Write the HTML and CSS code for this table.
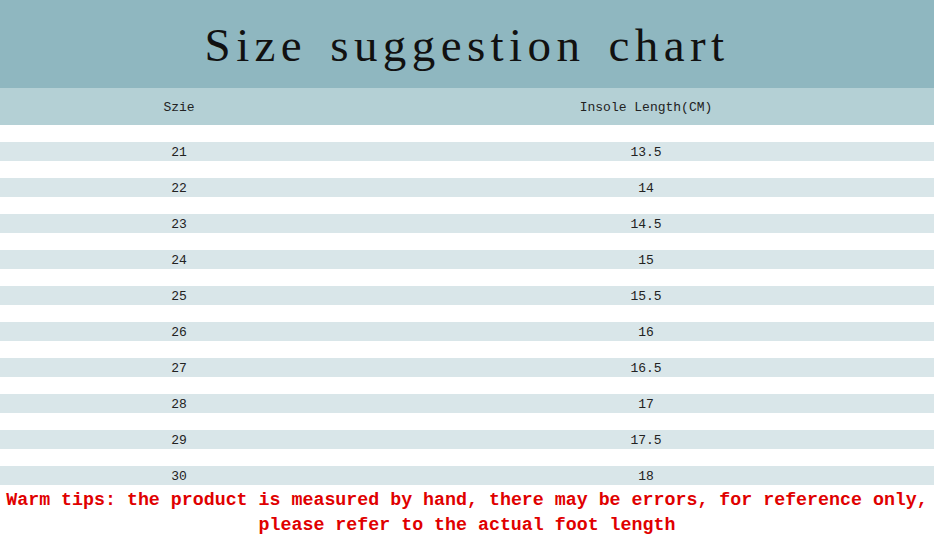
FILE: index.html
```html
<!DOCTYPE html>
<html>
<head>
<meta charset="utf-8">
<link rel="stylesheet" href="styles.css">
</head>
<body>
<div class="page">
  <header class="banner"><h1 class="title">Size suggestion chart</h1></header>
  <div class="head-row">
    <div class="cell c1">Szie</div>
    <div class="cell c2">Insole Length(CM)</div>
  </div>
  <div class="rows">
    <div class="row"><div class="cell c1">21</div><div class="cell c2">13.5</div></div>
    <div class="row"><div class="cell c1">22</div><div class="cell c2">14</div></div>
    <div class="row"><div class="cell c1">23</div><div class="cell c2">14.5</div></div>
    <div class="row"><div class="cell c1">24</div><div class="cell c2">15</div></div>
    <div class="row"><div class="cell c1">25</div><div class="cell c2">15.5</div></div>
    <div class="row"><div class="cell c1">26</div><div class="cell c2">16</div></div>
    <div class="row"><div class="cell c1">27</div><div class="cell c2">16.5</div></div>
    <div class="row"><div class="cell c1">28</div><div class="cell c2">17</div></div>
    <div class="row"><div class="cell c1">29</div><div class="cell c2">17.5</div></div>
    <div class="row"><div class="cell c1">30</div><div class="cell c2">18</div></div>
  </div>
  <p class="tips">Warm tips: the product is measured by hand, there may be errors, for reference only,<br>please refer to the actual foot length</p>
</div>
</body>
</html>
```
FILE: styles.css
```css
html, body {
  margin: 0;
  padding: 0;
  background: #ffffff;
}
.page {
  width: 934px;
  height: 538px;
  overflow: hidden;
  display: flex;
  flex-direction: column;
}
.banner {
  height: 88px;
  background: #8fb7c0;
  display: flex;
  align-items: center;
  justify-content: center;
}
.title {
  margin: 0;
  font-family: "Liberation Serif", serif;
  font-weight: normal;
  font-size: 47px;
  letter-spacing: 5.4px;
  word-spacing: 6px;
  color: #111;
  line-height: 1;
  padding-top: 2px;
}
.head-row {
  height: 37px;
  background: #b4d0d5;
  display: grid;
  grid-template-columns: 358px 576px;
  align-items: center;
}
.cell {
  font-family: "Liberation Mono", monospace;
  font-size: 13px;
  color: #222;
  text-align: center;
  padding-top: 1px;
}
.rows {
  display: flex;
  flex-direction: column;
}
.row {
  margin-top: 17px;
  height: 19px;
  background: #d9e6e9;
  display: grid;
  grid-template-columns: 358px 576px;
  align-items: center;
}
.tips {
  margin: 3px 0 0;
  font-family: "Liberation Mono", monospace;
  font-weight: bold;
  font-size: 18.3px;
  line-height: 25px;
  color: #e00000;
  text-align: center;
}
```
